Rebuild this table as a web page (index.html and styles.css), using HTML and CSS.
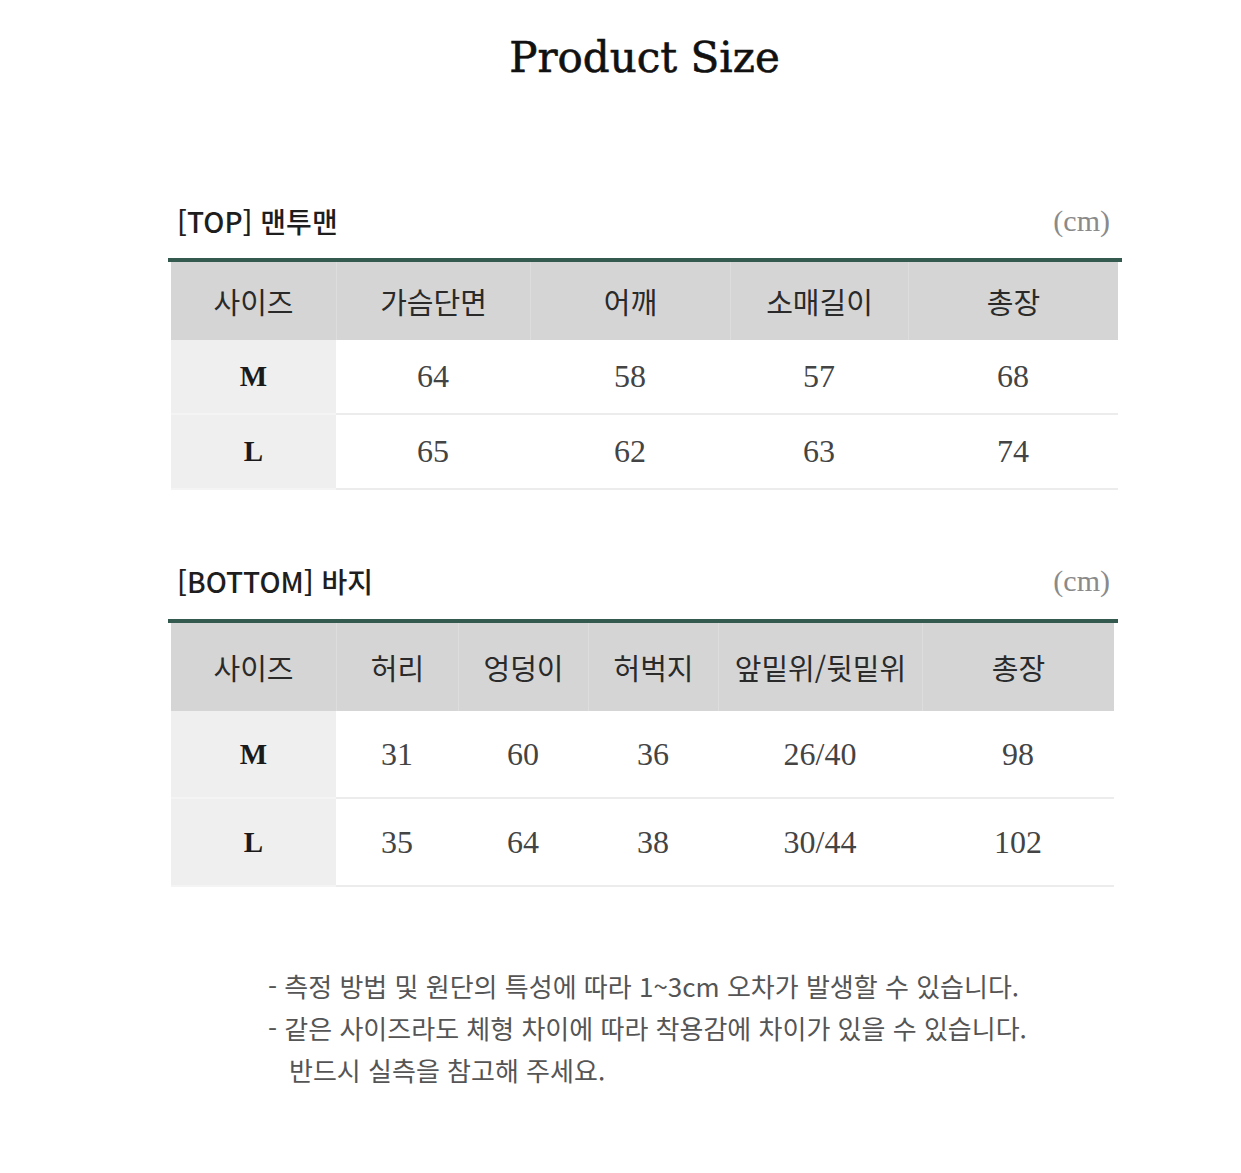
FILE: index.html
```html
<!DOCTYPE html>
<html lang="ko">
<head>
<meta charset="utf-8">
<title>Product Size</title>
<link rel="stylesheet" href="styles.css">
</head>
<body>
<div class="page">
  <h1 class="title">Product Size</h1>

  <section class="size-block size-block--top">
    <div class="caption">
      <span class="caption-name">[TOP] 맨투맨</span>
      <span class="caption-unit">(cm)</span>
    </div>
    <div class="size-table size-table--top">
      <div class="cell head">사이즈</div>
      <div class="cell head">가슴단면</div>
      <div class="cell head">어깨</div>
      <div class="cell head">소매길이</div>
      <div class="cell head">총장</div>

      <div class="cell size">M</div>
      <div class="cell num">64</div>
      <div class="cell num">58</div>
      <div class="cell num">57</div>
      <div class="cell num">68</div>

      <div class="cell size">L</div>
      <div class="cell num">65</div>
      <div class="cell num">62</div>
      <div class="cell num">63</div>
      <div class="cell num">74</div>
    </div>
  </section>

  <section class="size-block size-block--bottom">
    <div class="caption">
      <span class="caption-name">[BOTTOM] 바지</span>
      <span class="caption-unit">(cm)</span>
    </div>
    <div class="size-table size-table--bottom">
      <div class="cell head">사이즈</div>
      <div class="cell head">허리</div>
      <div class="cell head">엉덩이</div>
      <div class="cell head">허벅지</div>
      <div class="cell head">앞밑위/뒷밑위</div>
      <div class="cell head">총장</div>

      <div class="cell size">M</div>
      <div class="cell num">31</div>
      <div class="cell num">60</div>
      <div class="cell num">36</div>
      <div class="cell num">26/40</div>
      <div class="cell num">98</div>

      <div class="cell size">L</div>
      <div class="cell num">35</div>
      <div class="cell num">64</div>
      <div class="cell num">38</div>
      <div class="cell num">30/44</div>
      <div class="cell num">102</div>
    </div>
  </section>

  <div class="notes">
    <p class="note">- 측정 방법 및 원단의 특성에 따라 1~3cm 오차가 발생할 수 있습니다.</p>
    <p class="note">- 같은 사이즈라도 체형 차이에 따라 착용감에 차이가 있을 수 있습니다.<br>반드시 실측을 참고해 주세요.</p>
  </div>
</div>
</body>
</html>
```

FILE: styles.css
```css
html, body {
  margin: 0;
  padding: 0;
  background: #ffffff;
}

.page {
  width: 1241px;
  padding-top: 28px;
  padding-bottom: 60px;
  font-family: "Noto Sans CJK KR", "Noto Sans", sans-serif;
}

.title {
  margin: 0;
  height: 60px;
  line-height: 60px;
  text-align: center;
  padding-left: 48px;
  font-family: "DejaVu Serif", "Liberation Serif", serif;
  font-size: 42px;
  font-weight: 400;
  color: #111111;
  -webkit-text-stroke: 0.6px #111111;
}

.size-block {
  margin-left: 168px;
}

.size-block--top {
  width: 954px;
  margin-top: 113px;
}

.size-block--bottom {
  width: 950px;
  margin-top: 71px;
}

.caption {
  display: flex;
  justify-content: space-between;
  align-items: center;
  height: 40px;
  padding: 0 12px 0 9px;
}

.size-block--top .caption {
  margin-bottom: 17px;
}

.size-block--bottom .caption {
  margin-bottom: 18px;
  padding-right: 8px;
}

.caption-name {
  font-size: 28px;
  font-weight: 500;
  color: #1e1e1e;
}

.caption-unit {
  font-family: "Liberation Serif", "DejaVu Serif", serif;
  font-size: 30px;
  color: #8a8a8a;
}

.size-table {
  display: grid;
  border-top: 4px solid #34594f;
  padding: 0 4px 0 3px;
}

.size-table--top {
  grid-template-columns: 165px 194px 200px 178px 210px;
  grid-template-rows: 78px 75px 75px;
}

.size-table--bottom {
  grid-template-columns: 165px 122px 130px 130px 204px 192px;
  grid-template-rows: 88px 88px 88px;
}

.cell {
  display: flex;
  align-items: center;
  justify-content: center;
  box-sizing: border-box;
}

.head {
  background: #d5d5d5;
  font-size: 29px;
  color: #2a2a2a;
  border-left: 1px solid #dddddd;
}

.head:first-child {
  border-left: none;
}

.size {
  background: #efefef;
  font-family: "Liberation Serif", "DejaVu Serif", serif;
  font-size: 29px;
  font-weight: 700;
  color: #1a1a1a;
  border-bottom: 2px solid #f4f4f4;
}

.num {
  background: #ffffff;
  font-family: "Liberation Serif", "DejaVu Serif", serif;
  font-size: 32px;
  color: #444444;
  border-bottom: 2px solid #ececec;
}

.notes {
  margin-top: 78px;
  margin-left: 268px;
}

.note {
  margin: 0;
  padding-left: 21px;
  text-indent: -21px;
  font-size: 26px;
  line-height: 42px;
  color: #555555;
  font-weight: 400;
}
```
